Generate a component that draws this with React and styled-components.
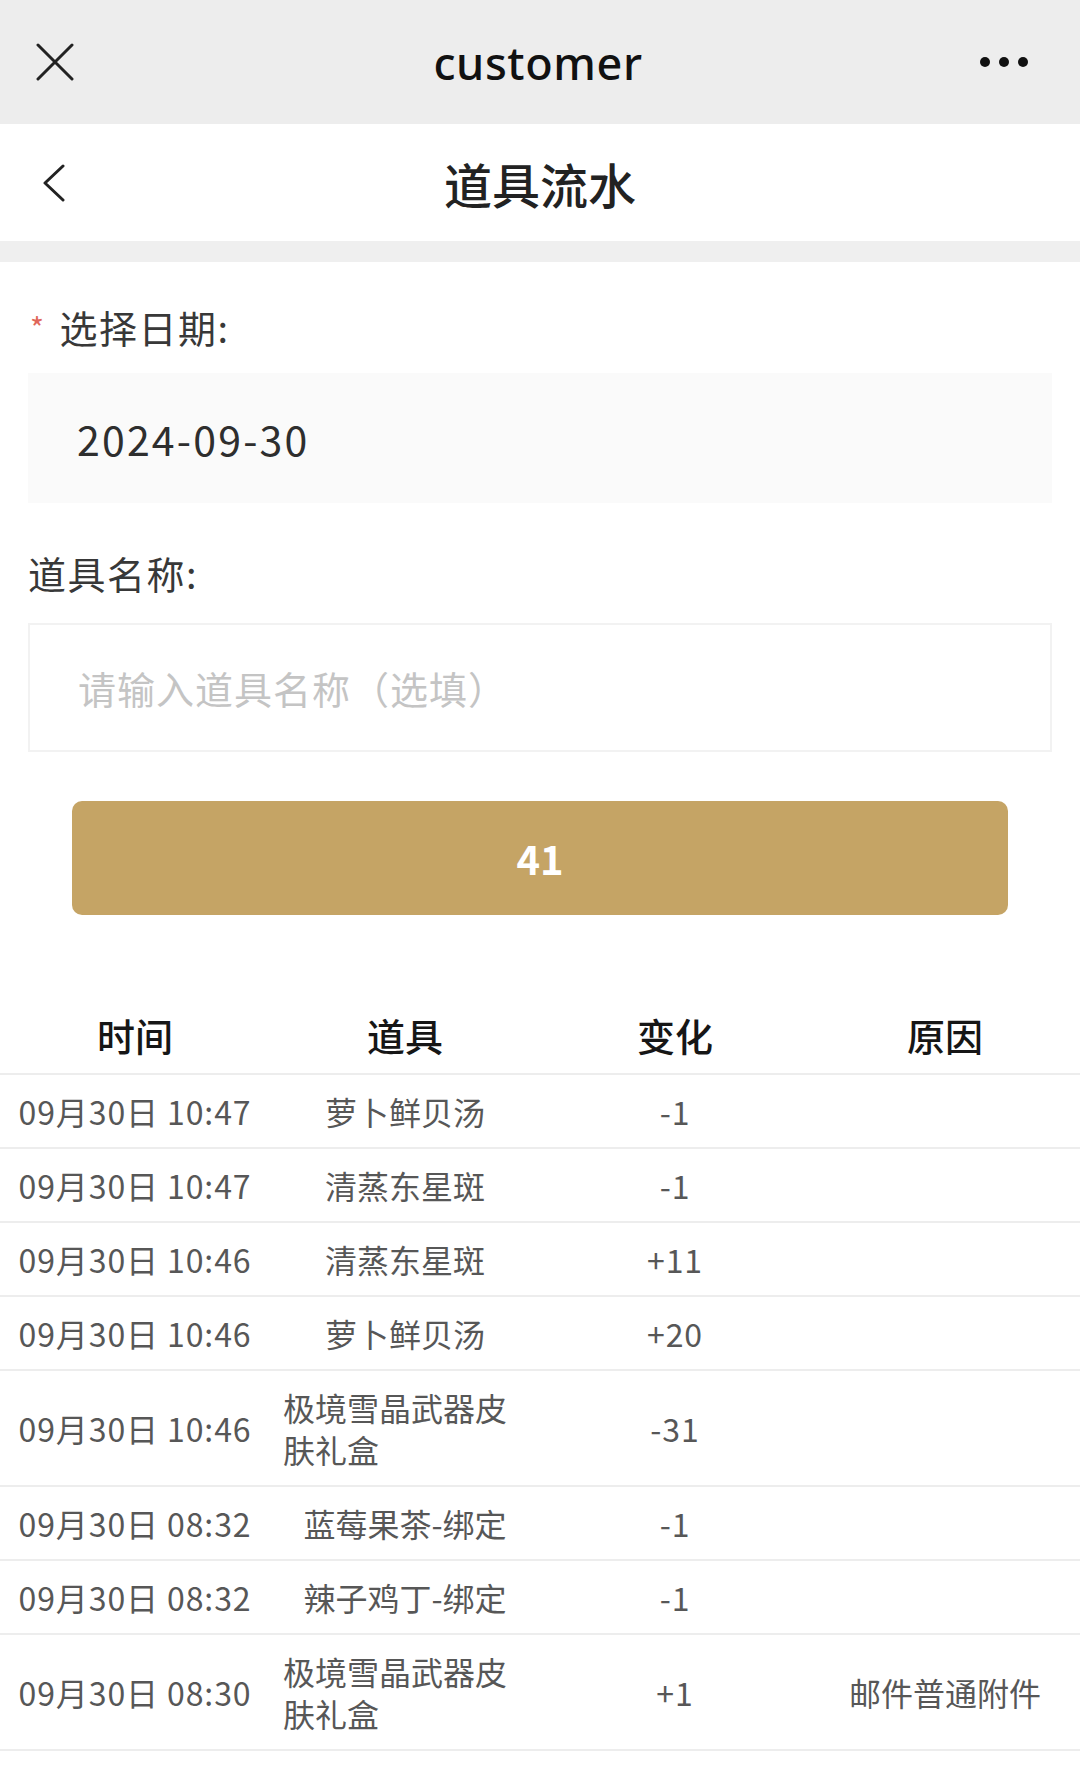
import React from "react";
import styled, { createGlobalStyle } from "styled-components";

const GlobalStyle = createGlobalStyle`
    body {
        margin: 0;
        background: #fff;
        font-family: "Noto Sans CJK SC", "Noto Sans", sans-serif;
    }
    * { box-sizing: border-box; }
`

const Page = styled('div')`
    width: 1080px;
    min-height: 1774px;
    background: #fff;
`

const TopBar = styled('header')`
    height: 124px;
    background: #ededed;
    display: grid;
    grid-template-columns: 1fr auto 1fr;
    align-items: center;
    padding: 0 52px 0 36px;
`

const AppName = styled('div')`
    font-family: "Noto Sans", sans-serif;
    font-size: 45px;
    font-weight: 500;
    color: #111;
    letter-spacing: 0.6px;
    padding-left: 12px;
`

const Dots = styled('div')`
    justify-self: end;
    display: flex;
    gap: 9px;
`

const Dot = styled('span')`
    width: 10px;
    height: 10px;
    border-radius: 50%;
    background: #111;
`

const TitleBar = styled('div')`
    height: 117px;
    background: #fff;
    display: grid;
    grid-template-columns: 1fr auto 1fr;
    align-items: center;
    padding: 0 43px;
`

const PageTitle = styled('h1')`
    margin: 0;
    font-size: 48px;
    font-weight: 500;
    color: #222;
`

const Divider = styled('div')`
    height: 21px;
    background: #efefef;
`

const Form = styled('section')`
    padding: 40px 28px 0;
    display: flex;
    flex-direction: column;
`

const Label = styled('label')`
    font-size: 38px;
    line-height: 50px;
    color: #383838;
    letter-spacing: 1.5px;
    margin-top: ${(p) => p.$gap || 0}px;
    padding-left: ${(p) => (p.$inset ? 2 : 0)}px;
`

const Required = styled('span')`
    color: #e0675a;
    font-size: 30px;
    vertical-align: top;
    margin-right: 14px;
`

const DateField = styled('div')`
    margin-top: 21px;
    height: 130px;
    background: #fafafa;
    display: flex;
    align-items: center;
    padding-left: 49px;
    font-size: 41px;
    letter-spacing: 2.2px;
    color: #2e2e2e;
`

const NameInput = styled('input')`
    margin-top: 25px;
    height: 129px;
    border: 2px solid #f2f2f2;
    background: #fff;
    padding: 0 0 0 48px;
    font-family: inherit;
    font-size: 38px;
    letter-spacing: 1px;
    color: #333;
    outline: none;
    &::placeholder { color: #c4c4c4; }
`

const SearchButton = styled('button')`
    margin: 49px auto 0;
    width: 936px;
    height: 114px;
    border: none;
    border-radius: 10px;
    background: #c5a465;
    color: #fff;
    font-family: inherit;
    font-size: 40px;
    font-weight: 700;
`

const Table = styled('div')`
    margin-top: 80px;
`

const Row = styled('div')`
    display: grid;
    grid-template-columns: repeat(4, 1fr);
    border-bottom: 2px solid #ededed;
`

const HeadCell = styled('div')`
    height: 78px;
    display: flex;
    justify-content: center;
    align-items: center;
    font-size: 38px;
    font-weight: 500;
    color: #161616;
`

const Cell = styled('div')`
    display: flex;
    justify-content: center;
    align-items: center;
    padding: 15px 13px;
    font-size: 32px;
    line-height: 42px;
    letter-spacing: ${(p) => (p.$num ? '0.9px' : '0')};
    color: #575757;
    text-align: left;
`

const CloseIcon = () => (
    <svg width="38" height="38" viewBox="0 0 38 38">
        <path d="M2 2 L36 36 M36 2 L2 36" stroke="#222" strokeWidth="3" strokeLinecap="round" fill="none" />
    </svg>
)

const BackIcon = () => (
    <svg width="22" height="38" viewBox="0 0 22 38">
        <path d="M20 2 L2 19 L20 36" stroke="#222" strokeWidth="3" strokeLinecap="round" strokeLinejoin="round" fill="none" />
    </svg>
)

const records = [
    { time: '09月30日 10:47', item: '萝卜鲜贝汤', change: '-1', reason: '' },
    { time: '09月30日 10:47', item: '清蒸东星斑', change: '-1', reason: '' },
    { time: '09月30日 10:46', item: '清蒸东星斑', change: '+11', reason: '' },
    { time: '09月30日 10:46', item: '萝卜鲜贝汤', change: '+20', reason: '' },
    { time: '09月30日 10:46', item: '极境雪晶武器皮肤礼盒', change: '-31', reason: '' },
    { time: '09月30日 08:32', item: '蓝莓果茶-绑定', change: '-1', reason: '' },
    { time: '09月30日 08:32', item: '辣子鸡丁-绑定', change: '-1', reason: '' },
    { time: '09月30日 08:30', item: '极境雪晶武器皮肤礼盒', change: '+1', reason: '邮件普通附件' },
]

const App = () => {
    return (
        <Page>
            <GlobalStyle />
            <TopBar>
                <CloseIcon />
                <AppName>customer</AppName>
                <Dots>
                    <Dot />
                    <Dot />
                    <Dot />
                </Dots>
            </TopBar>
            <TitleBar>
                <BackIcon />
                <PageTitle>道具流水</PageTitle>
                <span />
            </TitleBar>
            <Divider />
            <Form>
                <Label $inset>
                    <Required>*</Required>选择日期:
                </Label>
                <DateField>2024-09-30</DateField>
                <Label $gap={45}>道具名称:</Label>
                <NameInput placeholder="请输入道具名称（选填）" />
                <SearchButton>41</SearchButton>
            </Form>
            <Table>
                <Row>
                    <HeadCell>时间</HeadCell>
                    <HeadCell>道具</HeadCell>
                    <HeadCell>变化</HeadCell>
                    <HeadCell>原因</HeadCell>
                </Row>
                {records.map((r, i) => (
                    <Row key={i}>
                        <Cell $num>{r.time}</Cell>
                        <Cell><span>{r.item}</span></Cell>
                        <Cell $num>{r.change}</Cell>
                        <Cell>{r.reason}</Cell>
                    </Row>
                ))}
            </Table>
        </Page>
    )
}

export default App
